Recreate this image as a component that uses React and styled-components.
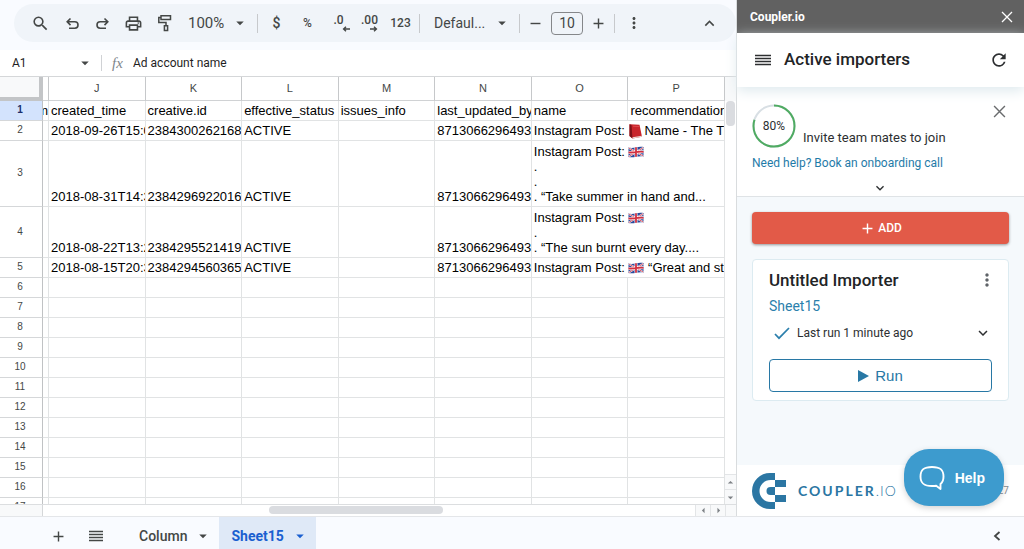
import React, { useState } from "react";
import styled, { createGlobalStyle } from "styled-components";
import {
  MdSearch,
  MdOutlinePrint,
  MdArrowDropDown,
  MdAdd,
  MdRemove,
  MdMoreVert,
  MdRefresh,
  MdKeyboardArrowUp,
  MdKeyboardArrowDown,
  MdArrowDropUp,
  MdArrowLeft,
  MdArrowRight,
} from "react-icons/md";

const COLUMNS = ["J", "K", "L", "M", "N", "O", "P"];

const FIELDS = [
  "created_time",
  "creative.id",
  "effective_status",
  "issues_info",
  "last_updated_by",
  "name",
  "recommendations",
];

const RECORDS = [
  {
    height: 20,
    cells: ["2018-09-26T15:0", "2384300262168", "ACTIVE", "", "8713066296493"],
    name: [["Instagram Post: ", "book", "Name - The Ti"]],
  },
  {
    height: 66,
    cells: ["2018-08-31T14:3", "2384296922016", "ACTIVE", "", "8713066296493"],
    name: [["Instagram Post: ", "flag"], ["."], ["."], [". “Take summer in hand and..."]],
  },
  {
    height: 51,
    cells: ["2018-08-22T13:2", "2384295521419", "ACTIVE", "", "8713066296493"],
    name: [["Instagram Post: ", "flag"], ["."], [". “The sun burnt every day...."]],
  },
  {
    height: 20,
    cells: ["2018-08-15T20:3", "2384294560365", "ACTIVE", "", "8713066296493"],
    name: [["Instagram Post: ", "flag", " “Great and str"]],
  },
];

const EMPTY_ROWS = Array.from({ length: 12 }, (_, i) => i + 6);

function BookIcon() {
  return (
    <Emoji width="16" height="16" viewBox="0 0 16 16" role="img" aria-label="book">
      <path d="M1.500 1.200 11.500 1.800l2.500 12-9.500 1.700L1.500 13z" fill="#c9252b" />
      <path d="M1.500 1.200l2 .8 1 13.500L1.500 13z" fill="#7d1218" />
      <path d="M4.500 15.500 14 13.800l-.2-1.100-9.300 1.600z" fill="#e9d9d4" />
      <path d="M5 3.200l6 .4" stroke="#e5575a" strokeWidth=".7" />
    </Emoji>
  );
}

function FlagIcon() {
  return (
    <Emoji width="16" height="16" viewBox="0 0 16 16" role="img" aria-label="UK flag">
      <path d="M.5 3.500c5 1.600 9-1.600 15-.4v9.400c-5-1.200-10 1.800-15 .4z" fill="#2b4a9b" />
      <path d="M.8 4 15.200 12M.8 12.500 15.200 3.700" stroke="#fff" strokeWidth="1.800" />
      <path d="M.8 4 15.200 12M.8 12.500 15.200 3.700" stroke="#d22f3f" strokeWidth=".8" />
      <path d="M8 3.200v9.600M.5 8.300c5 1 9-1.400 15-.5" stroke="#fff" strokeWidth="3" fill="none" />
      <path d="M8 3.200v9.600M.5 8.300c5 1 9-1.400 15-.5" stroke="#d22f3f" strokeWidth="1.800" fill="none" />
    </Emoji>
  );
}

function Glyph({ part }) {
  if (part === "book") return <BookIcon />;
  if (part === "flag") return <FlagIcon />;
  return part;
}

function UndoIcon({ flipped }) {
  return (
    <svg width="16" height="16" viewBox="0 0 16 16" fill="none" stroke="currentColor" strokeWidth="1.6">
      <g transform={flipped ? "matrix(-1 0 0 1 16 0)" : undefined}>
        <path d="M6.500 3.500 3.200 6.800l3.300 3.300M3.500 6.800H10.800a3.200 3.200 0 0 1 0 6.400H5" />
      </g>
    </svg>
  );
}

function PaintIcon() {
  return (
    <svg width="18" height="18" viewBox="0 0 18 18" fill="none" stroke="currentColor" strokeWidth="1.5">
      <path d="M5 1.800h9.500v3.600H5zM5 3.600H2.800v5H10v3" />
      <path d="M8.400 11.800h3.200v4.600H8.400z" />
    </svg>
  );
}

function DecimalIcon({ more }) {
  return (
    <Decimal>
      <span>{more ? ".00" : ".0"}</span>
      <DecimalArrow $outside={!more} width="8" height="6" viewBox="0 0 8 6">
        <path d={more ? "M0 3h6M4 .8 6.400 3 4 5.200" : "M8 3H2M4 .8 1.600 3 4 5.200"} />
      </DecimalArrow>
    </Decimal>
  );
}

function LinesIcon({ size, color }) {
  return (
    <svg width={size} height="12" viewBox={`0 0 ${size} 12`} stroke={color} strokeWidth="1.3">
      <path d={`M0 1.500H${size}M0 4.500H${size}M0 7.500H${size}M0 10.500H${size}`} />
    </svg>
  );
}

function CloseIcon({ size }) {
  return (
    <svg width={size} height={size} viewBox="0 0 12 12" stroke="currentColor" strokeWidth="1.3">
      <path d="M1 1l10 10M11 1 1 11" />
    </svg>
  );
}

function Toolbar() {
  return (
    <ToolbarArea>
      <Pill>
        <ToolButton aria-label="Search"><MdSearch size={19} /></ToolButton>
        <ToolButton aria-label="Undo"><UndoIcon /></ToolButton>
        <ToolButton aria-label="Redo"><UndoIcon flipped /></ToolButton>
        <ToolButton aria-label="Print"><MdOutlinePrint size={19} /></ToolButton>
        <ToolButton aria-label="Paint format"><PaintIcon /></ToolButton>
        <SelectWrap $width={77}>
          <ToolSelect aria-label="Zoom" $size={15} $indent={8}><option>100%</option></ToolSelect>
          <MdArrowDropDown size={18} />
        </SelectWrap>
        <Separator />
        <Group>
          <ToolButton aria-label="Format as currency">$</ToolButton>
          <ToolButton $small aria-label="Format as percent">%</ToolButton>
          <ToolButton aria-label="Decrease decimal places"><DecimalIcon /></ToolButton>
          <ToolButton aria-label="Increase decimal places"><DecimalIcon more /></ToolButton>
          <ToolButton $small aria-label="More formats">123</ToolButton>
        </Group>
        <Separator />
        <SelectWrap $width={99}>
          <ToolSelect aria-label="Font" $size={14} $indent={14}><option>Defaul...</option></ToolSelect>
          <MdArrowDropDown size={18} />
        </SelectWrap>
        <Separator />
        <ToolButton aria-label="Decrease font size"><MdRemove size={17} /></ToolButton>
        <SizeInput aria-label="Font size" defaultValue="10" />
        <ToolButton aria-label="Increase font size"><MdAdd size={17} /></ToolButton>
        <Separator />
        <Group>
          <ToolButton aria-label="More"><MdMoreVert size={18} /></ToolButton>
        </Group>
        <Spacer />
        <ToolButton aria-label="Hide the menus"><MdKeyboardArrowUp size={19} /></ToolButton>
      </Pill>
    </ToolbarArea>
  );
}

function SheetTable() {
  return (
    <Table>
      <colgroup>
        <col style={{ width: 43 }} />
        <col style={{ width: 6 }} />
        {COLUMNS.map((c) => <col key={c} />)}
      </colgroup>
      <thead>
        <tr>
          <Corner />
          <ColumnHead />
          {COLUMNS.map((c) => <ColumnHead key={c} scope="col">{c}</ColumnHead>)}
        </tr>
      </thead>
      <tbody>
        <Row $height={20}>
          <RowHead scope="row" $selected>1</RowHead>
          <Cell><Sliver>m</Sliver></Cell>
          {FIELDS.map((f) => <Cell key={f}>{f}</Cell>)}
        </Row>
        {RECORDS.map((record, i) => (
          <Row key={i} $height={record.height}>
            <RowHead scope="row">{i + 2}</RowHead>
            <Cell />
            {record.cells.map((value, j) => <Cell key={j}>{value}</Cell>)}
            <Cell colSpan={2}>
              {record.name.map((line, j) => (
                <Line key={j}>
                  {line.map((part, k) => <Glyph key={k} part={part} />)}
                </Line>
              ))}
            </Cell>
          </Row>
        ))}
        {EMPTY_ROWS.map((n) => (
          <Row key={n} $height={20}>
            <RowHead scope="row">{n}</RowHead>
            <Cell />
            {COLUMNS.map((c) => <Cell key={c} />)}
          </Row>
        ))}
      </tbody>
    </Table>
  );
}

function Sheet() {
  return (
    <SheetPane>
      <Toolbar />
      <FormulaBar>
        <NameBox>
          <PlainInput aria-label="Name box" defaultValue="A1" />
          <MdArrowDropDown size={18} color="#444746" />
        </NameBox>
        <Fx>fx</Fx>
        <PlainInput aria-label="Formula" defaultValue="Ad account name" />
      </FormulaBar>
      <GridArea>
        <Viewport><SheetTable /></Viewport>
        <VerticalBar>
          <VerticalTrack><VerticalThumb /></VerticalTrack>
          <ScrollButton $tall aria-label="Scroll up"><MdArrowDropUp size={13} /></ScrollButton>
          <ScrollButton $tall aria-label="Scroll down"><MdArrowDropDown size={13} /></ScrollButton>
        </VerticalBar>
      </GridArea>
      <HorizontalBar>
        <BarStart />
        <HorizontalTrack><HorizontalThumb /></HorizontalTrack>
        <ScrollButton aria-label="Scroll left"><MdArrowLeft size={13} /></ScrollButton>
        <ScrollButton aria-label="Scroll right"><MdArrowRight size={13} /></ScrollButton>
        <BarEnd />
      </HorizontalBar>
    </SheetPane>
  );
}

function Progress({ value }) {
  return (
    <Ring>
      <svg width="44" height="44" viewBox="0 0 44 44" fill="none" strokeWidth="2">
        <circle cx="22" cy="22" r="20.500" stroke="#d8dfe4" />
        <circle
          cx="22"
          cy="22"
          r="20.500"
          stroke="#4fab62"
          pathLength="100"
          strokeDasharray={`${value} 100`}
          transform="rotate(-90 22 22)"
        />
      </svg>
      <RingLabel>{value}%</RingLabel>
    </Ring>
  );
}

function CouplerLogo() {
  return (
    <svg width="34" height="36" viewBox="0 0 34 36" aria-hidden="true">
      <path d="M23 0h-5a18 18 0 0 0 0 36h5v-7h-4.500a11 11 0 0 1 0-22H23z" fill="#2b76a3" />
      <path d="M23 7h11v7H23zM23 22h11v7H23z" fill="#2b76a3" />
      <path d="M23 14h-4.500a4 4 0 0 0 0 8H23z" fill="#2b76a3" />
    </svg>
  );
}

function Importer() {
  const [open, setOpen] = useState(false);
  return (
    <Card>
      <CardTop>
        <CardTitle>Untitled Importer</CardTitle>
        <IconButton aria-label="Importer menu"><MdMoreVert size={20} color="#5f6368" /></IconButton>
      </CardTop>
      <SheetLink href="#sheet15">Sheet15</SheetLink>
      <LastRun>
        <svg width="16" height="14" viewBox="0 0 16 14" fill="none" stroke="#2b7fac" strokeWidth="1.700">
          <path d="M1 8l4 4.200L15 2" />
        </svg>
        <span>Last run 1 minute ago</span>
        <Spacer />
        <IconButton aria-label="Details" aria-expanded={open} onClick={() => setOpen(!open)}>
          <MdKeyboardArrowDown size={18} />
        </IconButton>
      </LastRun>
      <RunButton>
        <svg width="11" height="12" viewBox="0 0 11 12"><path d="M0 0l11 6-11 6z" fill="#2878a5" /></svg>
        Run
      </RunButton>
    </Card>
  );
}

function Sidebar() {
  return (
    <SidebarPane>
      <SidebarHead>
        Coupler.io
        <IconButton aria-label="Close Coupler.io"><CloseIcon size={12} /></IconButton>
      </SidebarHead>
      <TitleBar>
        <IconButton aria-label="Menu"><LinesIcon size={16} color="#2d2f31" /></IconButton>
        <PaneTitle>Active importers</PaneTitle>
        <IconButton aria-label="Refresh"><MdRefresh size={20} /></IconButton>
      </TitleBar>
      <Onboarding>
        <OnboardingTop>
          <Progress value={80} />
          <Invite>Invite team mates to join</Invite>
          <Dismiss aria-label="Dismiss"><CloseIcon size={13} /></Dismiss>
        </OnboardingTop>
        <HelpLink href="#onboarding">Need help? Book an onboarding call</HelpLink>
        <Expand aria-label="Expand"><MdKeyboardArrowDown size={16} /></Expand>
      </Onboarding>
      <PaneBody>
        <AddButton><MdAdd size={17} />ADD</AddButton>
        <Importer />
      </PaneBody>
      <PaneFooter>
        <CouplerLogo />
        <Wordmark>COUPLER<span>.IO</span></Wordmark>
        <Version>27</Version>
      </PaneFooter>
      <HelpButton>
        <svg width="26" height="26" viewBox="0 0 26 26" fill="none" stroke="#fff" strokeWidth="1.900" strokeLinejoin="round">
          <path d="M13 2C5 2 1.500 4.500 1.500 11.500S5 21 13 21c1.500 0 2.900 0 4.200-.2l4.300 3.200v-5c2-1.500 3-4 3-7.500C24.500 4.500 21 2 13 2z" />
        </svg>
        Help
      </HelpButton>
    </SidebarPane>
  );
}

export default function App() {
  return (
    <Page>
      <GlobalStyle />
      <Main>
        <Sheet />
        <Sidebar />
      </Main>
      <TabBar>
        <TabTool aria-label="Add sheet"><MdAdd size={17} /></TabTool>
        <TabTool aria-label="All sheets"><LinesIcon size={14} color="#444746" /></TabTool>
        <Tab>Column<MdArrowDropDown size={18} /></Tab>
        <Tab $active>Sheet15<MdArrowDropDown size={18} /></Tab>
        <Spacer />
        <TabTool aria-label="Show side panel">
          <svg width="8" height="10" viewBox="0 0 8 10" fill="none" stroke="currentColor" strokeWidth="1.800">
            <path d="M6.500 1 2 5l4.500 4" />
          </svg>
        </TabTool>
      </TabBar>
    </Page>
  );
}

const GlobalStyle = createGlobalStyle`
  * {
    box-sizing: border-box;
  }
  body {
    margin: 0;
    font-family: Roboto, "Liberation Sans", sans-serif;
    color: #2d2f31;
  }
  button, input, select {
    font-family: inherit;
    color: inherit;
    border: none;
    background: none;
    padding: 0;
    margin: 0;
  }
  svg {
    flex-shrink: 0;
  }
`;

const Page = styled.div`
  display: flex;
  flex-direction: column;
  height: 100vh;
  overflow: hidden;
`;

const Main = styled.main`
  display: flex;
  flex: 1;
  min-height: 0;
`;

const Spacer = styled.div`
  flex: 1;
`;

const SheetPane = styled.section`
  display: flex;
  flex-direction: column;
  flex: 1;
  min-width: 0;
`;

const ToolbarArea = styled.div`
  background: #f9fbff;
  padding: 4px 0 8px 14px;
`;

const Pill = styled.div`
  display: flex;
  align-items: center;
  height: 38px;
  padding: 0 11px;
  border-radius: 19px;
  background: #f0f4f9;
  color: #444746;
`;

const ToolButton = styled.button`
  display: flex;
  align-items: center;
  justify-content: center;
  width: 31px;
  height: 28px;
  font-size: ${(p) => (p.$small ? "12px" : "14px")};
  font-weight: 500;
`;

const Group = styled.div`
  display: flex;
  padding: 0 3px;
`;

const Separator = styled.div`
  width: 1px;
  height: 19px;
  background: #c7c9cc;
`;

const SelectWrap = styled.div`
  display: flex;
  align-items: center;
  width: ${(p) => p.$width}px;
  padding-right: 8px;
`;

const ToolSelect = styled.select`
  appearance: none;
  flex: 1;
  min-width: 0;
  height: 28px;
  padding-left: ${(p) => p.$indent}px;
  font-size: ${(p) => p.$size}px;
`;

const SizeInput = styled.input`
  width: 32px;
  height: 23px;
  border: 1px solid #85878a;
  border-radius: 4px;
  font-size: 14px;
  text-align: center;
`;

const Decimal = styled.span`
  display: flex;
  flex-direction: column;
  align-items: flex-end;
  font-size: 12px;
  line-height: 11px;
`;

const DecimalArrow = styled.svg`
  margin-right: ${(p) => (p.$outside ? "-6px" : "0")};
  fill: none;
  stroke: currentColor;
  stroke-width: 1.4;
`;

const FormulaBar = styled.div`
  display: flex;
  align-items: center;
  height: 27px;
  border-bottom: 1px solid #d5d7d9;
  background: #fff;
`;

const NameBox = styled.div`
  display: flex;
  align-items: center;
  width: 102px;
  height: 16px;
  padding: 0 7px 0 12px;
  border-right: 1px solid #d0d2d5;
`;

const PlainInput = styled.input`
  flex: 1;
  min-width: 0;
  font-size: 12px;
  color: #1f1f1f;
`;

const Fx = styled.span`
  width: 31px;
  padding-left: 10px;
  font-family: "Liberation Serif", serif;
  font-size: 15px;
  font-style: italic;
  color: #80868b;
`;

const GridArea = styled.div`
  display: flex;
  flex: 1;
  min-height: 0;
`;

const Viewport = styled.div`
  flex: 1;
  min-width: 0;
  overflow: hidden;
`;

const Table = styled.table`
  width: 100%;
  table-layout: fixed;
  border-collapse: separate;
  border-spacing: 0;
  font-family: "Liberation Sans", Arial, sans-serif;
`;

const Corner = styled.td`
  padding: 0;
  background: #f8f9fa;
  border-right: 4px solid #c3c5c7;
  border-bottom: 4px solid #c3c5c7;
`;

const ColumnHead = styled.th`
  height: 24px;
  padding: 0 0 2px;
  border-right: 1px solid #c6c8ca;
  border-bottom: 1px solid #d0d2d4;
  font-size: 11px;
  font-weight: 400;
  color: #444746;
`;

const Row = styled.tr`
  height: ${(p) => p.$height}px;
`;

const RowHead = styled.th`
  padding: 0 2px 2px 0;
  border-right: 1px solid #c0c2c4;
  border-bottom: 1px solid #d5d7d9;
  background: ${(p) => (p.$selected ? "#d3e3fd" : "#fff")};
  color: ${(p) => (p.$selected ? "#1a2f6b" : "#444746")};
  font-size: 10px;
  font-weight: ${(p) => (p.$selected ? 700 : 400)};
`;

const Cell = styled.td`
  padding: 0 0 2px 2px;
  border-right: 1px solid #e1e3e4;
  border-bottom: 1px solid #e1e3e4;
  font-size: 13px;
  line-height: 15px;
  vertical-align: bottom;
  white-space: nowrap;
  overflow: hidden;
  color: #000;

  &:nth-child(2) {
    padding-left: 0;
  }
`;

const Line = styled.div`
  display: flex;
  height: 15px;
  white-space: pre;
`;

const Sliver = styled.div`
  display: flex;
  justify-content: flex-end;
`;

const Emoji = styled.svg`
  align-self: center;
`;

const VerticalBar = styled.div`
  display: flex;
  flex-direction: column;
  width: 11px;
  background: #fff;
`;

const VerticalTrack = styled.div`
  flex: 1;
  padding: 0 1px;
  border-top: 24px solid #f8f9fa;
`;

const VerticalThumb = styled.div`
  height: 25px;
  border-radius: 4px;
  background: #dadce0;
`;

const ScrollButton = styled.button`
  display: flex;
  align-items: center;
  justify-content: center;
  width: ${(p) => (p.$tall ? "11px" : "15px")};
  height: ${(p) => (p.$tall ? "15px" : "11px")};
  border: 0 solid #e3e5e7;
  border-width: ${(p) => (p.$tall ? "1px 0 0" : "0 0 0 1px")};
  background: #f8f9fa;
  color: #7d8185;
`;

const HorizontalBar = styled.div`
  display: flex;
  height: 12px;
  border-top: 1px solid #dcdee0;
`;

const BarStart = styled.div`
  width: 43px;
  border-right: 1px solid #d5d7d9;
  background: #f8f9fa;
`;

const BarEnd = styled.div`
  width: 11px;
  border-left: 1px solid #e3e5e7;
  background: #f8f9fa;
`;

const HorizontalTrack = styled.div`
  flex: 1;
  padding: 1px 0 0 226px;
`;

const HorizontalThumb = styled.div`
  width: 174px;
  height: 8px;
  border-radius: 4px;
  background: #dadce0;
`;

const SidebarPane = styled.aside`
  position: relative;
  display: flex;
  flex-direction: column;
  width: 288px;
  border-left: 1px solid #d9dcde;
  background: #fff;
`;

const IconButton = styled.button`
  display: flex;
  align-items: center;
  justify-content: center;
`;

const SidebarHead = styled.header`
  display: flex;
  align-items: center;
  justify-content: space-between;
  height: 33px;
  padding: 0 11px 0 13px;
  background: #616161;
  color: #fff;
  font-size: 12px;
  font-weight: 700;
`;

const TitleBar = styled.div`
  display: flex;
  align-items: center;
  gap: 13px;
  height: 54px;
  padding: 0 15px 0 18px;
  background: #fff;
  box-shadow: 0 4px 12px #dfeaee;
`;

const PaneTitle = styled.h1`
  flex: 1;
  margin: 0;
  font-size: 17px;
  line-height: 20px;
  padding-bottom: 2px;
  font-weight: 500;
  color: #222426;
`;

const Onboarding = styled.section`
  display: flex;
  flex-direction: column;
  height: 110px;
  padding: 17px 17px 0 15px;
  border-bottom: 1px solid #dfe3e6;
`;

const OnboardingTop = styled.div`
  display: flex;
  align-items: flex-end;
`;

const Ring = styled.div`
  display: grid;
  place-items: center;

  > * {
    grid-area: 1 / 1;
  }
`;

const RingLabel = styled.span`
  font-size: 12px;
`;

const Invite = styled.span`
  flex: 1;
  padding-left: 7px;
  font-size: 13px;
  line-height: 21px;
`;

const Dismiss = styled(IconButton)`
  align-self: flex-start;
  height: 15px;
  margin-right: 1px;
  color: #6a6c6e;
`;

const HelpLink = styled.a`
  margin-top: 7px;
  font-size: 12px;
  line-height: 16px;
  color: #1f7ba8;
  text-decoration: none;
`;

const Expand = styled(IconButton)`
  margin-top: 9px;
`;

const PaneBody = styled.div`
  flex: 1;
  min-height: 0;
  padding: 15px;
  background: #f5f9fc;
`;

const AddButton = styled.button`
  display: flex;
  align-items: center;
  justify-content: center;
  width: 100%;
  height: 32px;
  gap: 2px;
  border-radius: 4px;
  background: #e25a48;
  box-shadow: 0 1px 3px rgba(0, 0, 0, 0.4);
  color: #fff;
  font-size: 12px;
  font-weight: 500;
`;

const Card = styled.article`
  margin-top: 15px;
  padding: 9px 16px 8px;
  border: 1px solid #dcebf1;
  border-radius: 4px;
  background: #fff;
`;

const CardTop = styled.div`
  display: flex;
  align-items: center;
  justify-content: space-between;
  height: 22px;
  margin-right: -5px;
`;

const CardTitle = styled.h2`
  margin: 0;
  font-size: 17px;
  font-weight: 500;
  color: #222426;
`;

const SheetLink = styled.a`
  display: block;
  margin-top: 5px;
  font-size: 14px;
  line-height: 20px;
  color: #2b7fac;
  text-decoration: none;
`;

const LastRun = styled.div`
  display: flex;
  align-items: center;
  gap: 7px;
  height: 34px;
  padding-left: 5px;
  font-size: 12px;
`;

const RunButton = styled.button`
  display: flex;
  align-items: center;
  justify-content: center;
  gap: 6px;
  width: 100%;
  height: 33px;
  margin-top: 9px;
  border: 1px solid #2878a5;
  border-radius: 4px;
  color: #2878a5;
  font-family: "Liberation Sans", Arial, sans-serif;
  font-size: 15px;
`;

const PaneFooter = styled.footer`
  display: flex;
  align-items: center;
  height: 51px;
  padding: 0 15px;
  background: #fff;
`;

const Wordmark = styled.span`
  flex: 1;
  padding-left: 12px;
  font-family: Lato, sans-serif;
  font-size: 14px;
  font-weight: 700;
  letter-spacing: 2px;
  color: #2b76a3;

  span {
    font-weight: 300;
    letter-spacing: 1px;
  }
`;

const Version = styled.span`
  font-size: 10px;
  color: #8a8d90;
`;

/* floats over the bottom corner of the sidebar */
const HelpButton = styled.button`
  position: absolute;
  right: 20px;
  bottom: 10px;
  display: flex;
  align-items: center;
  gap: 10px;
  height: 57px;
  padding: 0 19px 0 15px;
  border-radius: 25px;
  background: #3d9bce;
  box-shadow: 0 2px 6px rgba(0, 0, 0, 0.18);
  color: #fff;
  font-family: "Liberation Sans", Arial, sans-serif;
  font-size: 14px;
  font-weight: 700;
`;

const TabBar = styled.nav`
  display: flex;
  align-items: stretch;
  height: 33px;
  padding: 0 8px 0 39px;
  border-top: 1px solid #e4e6e9;
  background: #f9fbff;
  color: #444746;
`;

const TabTool = styled.button`
  display: flex;
  align-items: center;
  justify-content: center;
  width: 38px;
  padding-top: 6px;
`;

const Tab = styled.button`
  display: flex;
  align-items: center;
  gap: 7px;
  padding: 5px 7px 0 12px;
  margin-left: ${(p) => (p.$active ? "0" : "12px")};
  background: ${(p) => (p.$active ? "#dfe9f7" : "none")};
  color: ${(p) => (p.$active ? "#1a5fd0" : "inherit")};
  font-size: 14px;
  font-weight: ${(p) => (p.$active ? 700 : 500)};
`;
